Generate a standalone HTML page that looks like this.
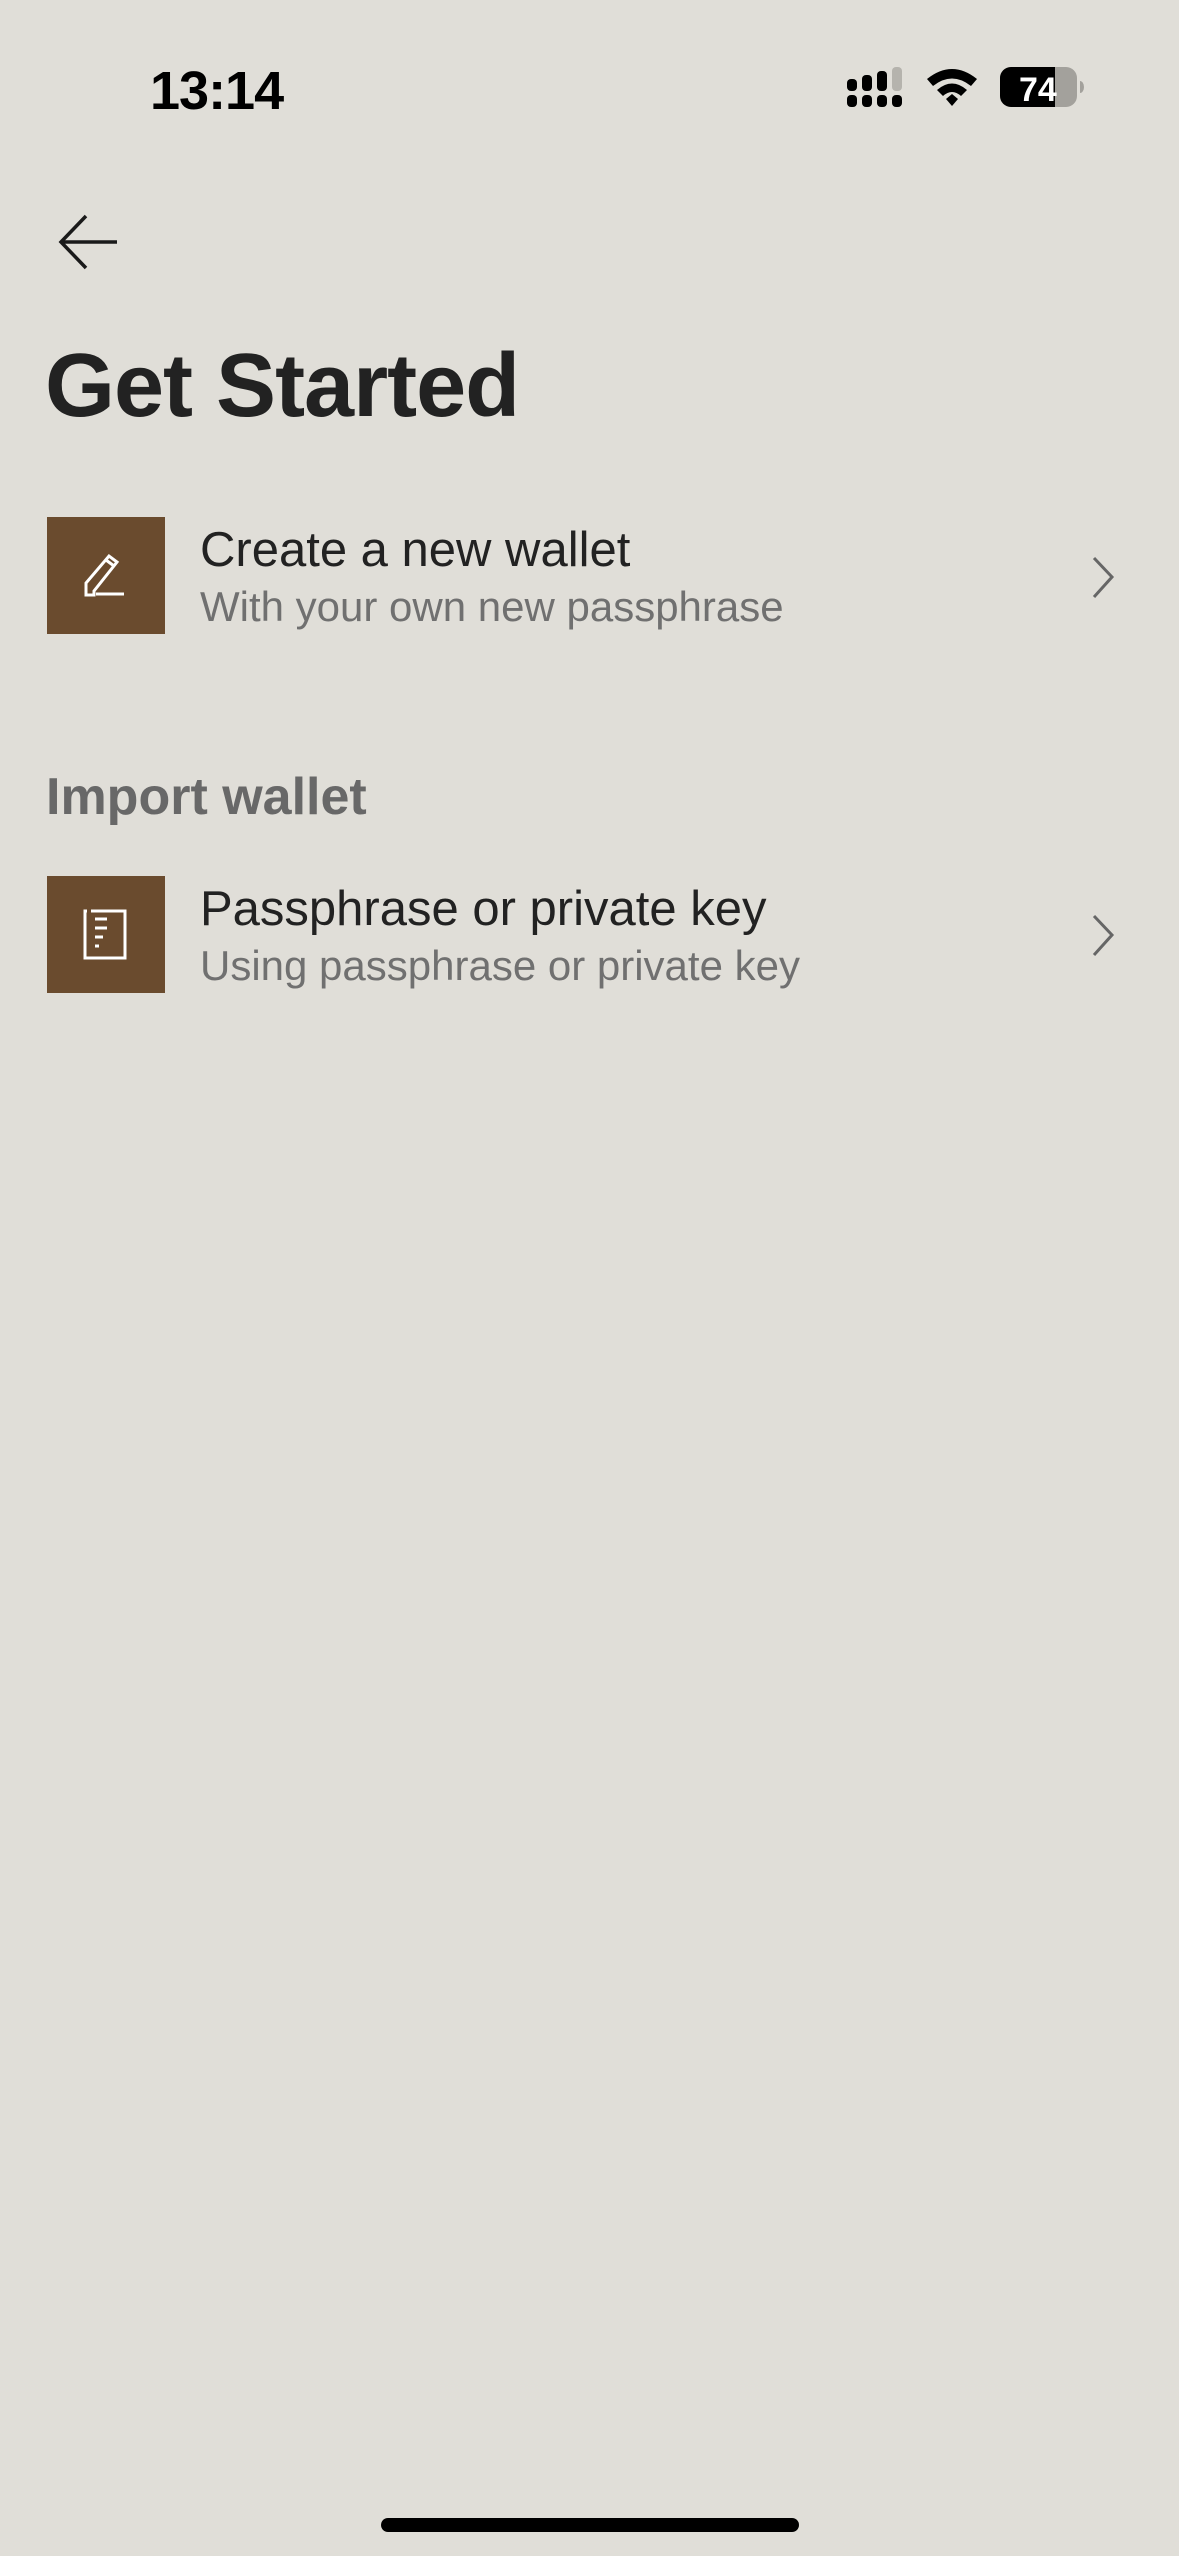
<!DOCTYPE html>
<html><head><meta charset="utf-8"><style>
*{margin:0;padding:0;box-sizing:border-box}
body{width:1179px;height:2556px;background:#e0ded8;position:relative;overflow:hidden;font-family:"Liberation Sans",sans-serif;color:#222}
.a{position:absolute;white-space:nowrap}
.box{position:absolute;left:47px;width:118px;height:117px;background:#6a4b2e}
.t{left:200px;font-size:49px;color:#222;line-height:1}
.s{left:200px;font-size:42px;color:#707070;line-height:1}
</style></head><body>
<div class="a" style="left:150px;top:60px;font-size:54px;font-weight:bold;color:#000;letter-spacing:-1px">13:14</div>
<svg class="a" style="left:845px;top:65px" width="240" height="45" viewBox="0 0 240 45">
<g fill="#000">
<rect x="2" y="14" width="10" height="12" rx="4"/><rect x="17" y="10" width="10" height="16" rx="4"/><rect x="32" y="6" width="10" height="20" rx="4"/>
<rect x="47" y="2" width="10" height="24" rx="4" fill="#b5b3ad"/>
<rect x="2" y="30" width="10" height="12" rx="4"/><rect x="17" y="30" width="10" height="12" rx="4"/><rect x="32" y="30" width="10" height="12" rx="4"/><rect x="47" y="30" width="10" height="12" rx="4"/>
<path d="M82 14 Q107 -6 132 14 L126 21 Q107 6 88 21Z"/><path d="M92 25 Q107 12 122 25 L116 31 Q107 23 98 31Z"/><path d="M101 34 L107 29 L113 34 L107 41Z"/>
<rect x="155" y="2" width="77" height="40" rx="11" fill="#a3a19c"/>
<path d="M166 2 H210 V42 H166 A11 11 0 0 1 155 31 V13 A11 11 0 0 1 166 2Z"/>
<path d="M235 16 a4 6 0 0 1 0 12Z" fill="#a3a19c"/>
</g>
<text x="174" y="36" font-family="Liberation Sans" font-weight="bold" font-size="34" fill="#fff">74</text>
</svg>
<svg class="a" style="left:58px;top:213px" width="62" height="58" viewBox="0 0 62 58"><path d="M59 29 H4 M28 3 L3 29 L28 55" fill="none" stroke="#1a1a1a" stroke-width="3.5"/></svg>
<div class="a" style="left:45px;top:341px;font-size:90px;font-weight:bold;letter-spacing:-1px;line-height:1;color:#222">Get Started</div>

<div class="box" style="top:517px"><svg width="118" height="117" viewBox="0 0 118 117"><path d="M39 78 V66 L62 39 L70 45 L47 74 V78 Z M59 43 L67 49" fill="none" stroke="#fff" stroke-width="3"/><path d="M49 77 H77" stroke="#fff" stroke-width="3"/></svg></div>
<div class="a t" style="top:526px">Create a new wallet</div>
<div class="a s" style="top:586px">With your own new passphrase</div>
<svg class="a" style="left:1090px;top:555px" width="28" height="45" viewBox="0 0 28 45"><path d="M4 3 L22 22 L4 42" fill="none" stroke="#666" stroke-width="3"/></svg>

<div class="a" style="left:46px;top:771px;font-size:52px;font-weight:bold;color:#686868;line-height:1">Import wallet</div>

<div class="box" style="top:876px"><svg width="118" height="117" viewBox="0 0 118 117"><path d="M44 35 H78 V82 H38 V35 H40" fill="none" stroke="#fff" stroke-width="3"/><path d="M48 43 H60 M48 52 H60 M48 61 H56 M48 70 H52" stroke="#fff" stroke-width="3"/></svg></div>
<div class="a t" style="top:885px">Passphrase or private key</div>
<div class="a s" style="top:945px">Using passphrase or private key</div>
<svg class="a" style="left:1090px;top:913px" width="28" height="45" viewBox="0 0 28 45"><path d="M4 3 L22 22 L4 42" fill="none" stroke="#666" stroke-width="3"/></svg>

<div class="a" style="left:381px;top:2518px;width:418px;height:14px;border-radius:7px;background:#000"></div>
</body></html>
